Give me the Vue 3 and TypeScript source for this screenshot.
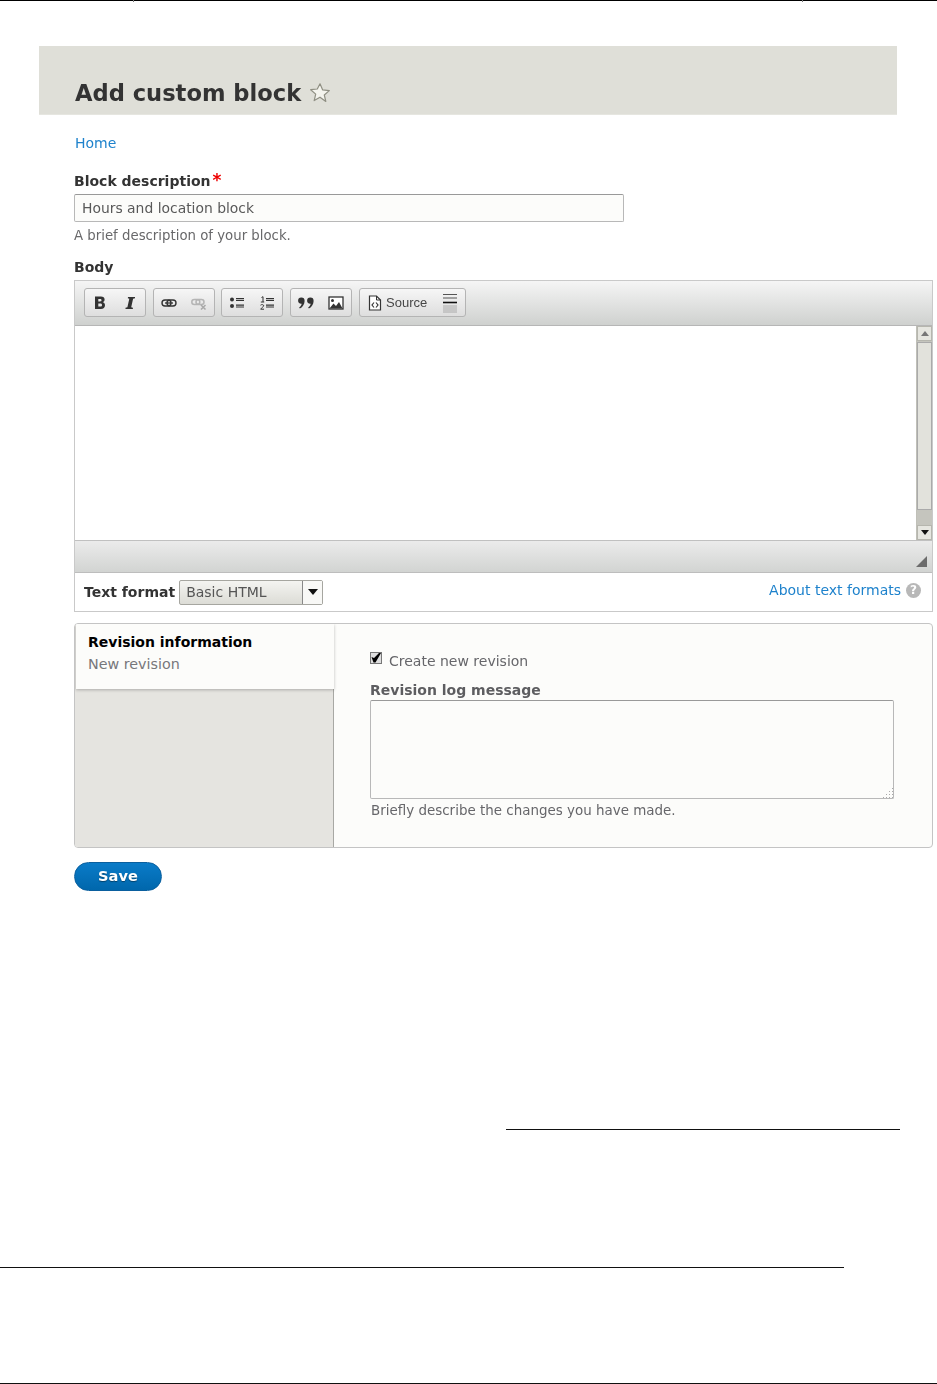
<script setup lang="ts">
const noop = (): void => {}
void noop
</script>

<template>
  <div class="page">
    <div class="top-rule"><i class="tick tick-a"></i><i class="tick tick-b"></i></div>
    <header class="header">
      <h1 class="title">Add custom block</h1>
      <svg class="star" width="22" height="22" viewBox="0 0 22 22">
        <path d="M11 1.800l2.700 6.100 6.600.7-5 4.400 1.500 6.500L11 15.200l-5.800 3.400 1.500-6.500-5-4.400 6.600-.7z" fill="#f4f4ee" stroke="#8f8f83" stroke-width="1.200" stroke-linejoin="round"/>
      </svg>
    </header>

    <main class="content">
      <a class="home link">Home</a>

      <div class="field-label desc-label">Block description<span class="req">*</span></div>
      <div class="text-input">Hours and location block</div>
      <div class="help first-help">A brief description of your block.</div>

      <div class="field-label body-label">Body</div>
      <section class="editor">
        <div class="toolbar">
          <div class="group">
            <span class="tb"><svg width="16" height="16" viewBox="0 0 16 16"><path d="M3 1.500h5.900c2.400 0 3.700 1.100 3.700 3.100 0 1.300-.7 2.300-1.900 2.700 1.500.3 2.300 1.400 2.300 3 0 2.400-1.500 3.700-4.100 3.700H3zM6.300 3.900v2.500h1.900c.8 0 1.300-.4 1.300-1.200s-.5-1.300-1.300-1.300zM6.300 8.600v3h2.200c.9 0 1.500-.5 1.500-1.500s-.6-1.500-1.500-1.500z" fill="#333"/></svg></span>
            <span class="tb"><svg width="16" height="16" viewBox="0 0 16 16"><path d="M6 2h7v1.300l-1.900.5-1.900 8.400 1.700.5V14H3.500v-1.300l1.900-.5 1.900-8.400-1.500-.5z" fill="#333"/></svg></span>
          </div>
          <div class="group group-tight">
            <span class="tb"><svg width="16" height="16" viewBox="0 0 16 16"><rect x="1" y="5" width="9" height="6" rx="3" fill="none" stroke="#333" stroke-width="1.400"/><rect x="6" y="5" width="9" height="6" rx="3" fill="none" stroke="#333" stroke-width="1.400"/><path d="M4 8h8" stroke="#333" stroke-width="1.300"/></svg></span>
            <span class="tb"><svg width="16" height="16" viewBox="0 0 16 16"><rect x="0.800" y="4.500" width="8" height="5" rx="2.500" fill="none" stroke="#b5b5b5" stroke-width="1.500"/><rect x="5" y="4.500" width="8" height="5" rx="2.500" fill="none" stroke="#b5b5b5" stroke-width="1.500"/><path d="M10 10l4.500 4.500M14.500 10L10 14.500" stroke="#a8a8a8" stroke-width="1.500"/></svg></span>
          </div>
          <div class="group">
            <span class="tb"><svg width="16" height="16" viewBox="0 0 16 16"><circle cx="3" cy="4.500" r="2" fill="#333"/><circle cx="3" cy="11" r="2" fill="#333"/><path d="M7 3.700h8M7 5.500h8M7 10.200h8M7 12h8" stroke="#333" stroke-width="1.200"/></svg></span>
            <span class="tb"><svg width="16" height="16" viewBox="0 0 16 16"><path d="M2.500 2.500l1.500-.8V7M1.800 7h3.400M1.500 10.200c1-1 3.300-.7 3.200.6-.1 1-2.300 2-3 3.400h3.300" fill="none" stroke="#333" stroke-width="1"/><path d="M7 3.700h8M7 5.500h8M7 10.200h8M7 12h8" stroke="#333" stroke-width="1.200"/></svg></span>
          </div>
          <div class="group">
            <span class="tb"><svg width="18" height="16" viewBox="0 0 18 16"><path d="M4.300 2.500a3.300 3.300 0 0 1 3.300 3.400c0 3-1.800 6-4.700 7.600l-.8-1c1.500-1.100 2.400-2.500 2.600-3.800a3.500 3.500 0 0 1-.5.100 3.150 3.150 0 0 1 .1-6.300zM13.300 2.500a3.300 3.300 0 0 1 3.300 3.400c0 3-1.800 6-4.700 7.600l-.8-1c1.500-1.100 2.400-2.500 2.600-3.800a3.500 3.500 0 0 1-.5.100 3.150 3.150 0 0 1 .1-6.300z" fill="#333"/></svg></span>
            <span class="tb"><svg width="16" height="16" viewBox="0 0 16 16"><rect x="1" y="2" width="14" height="12" fill="#fff" stroke="#333" stroke-width="1.300"/><circle cx="4.500" cy="5.500" r="1.500" fill="#333"/><path d="M1.500 13.500l4-5 2.500 2.500 3-4 3.500 6.500z" fill="#333"/></svg></span>
          </div>
          <div class="group source-group">
            <span class="tb"><svg width="16" height="16" viewBox="0 0 16 16"><path d="M2.500 1h7l4 4v10h-11z" fill="#fff" stroke="#333" stroke-width="1.200"/><path d="M9.500 1v4h4" fill="none" stroke="#333" stroke-width="1"/><path d="M7 7.500L5 10l2 2.500M9 7.500l2 2.500-2 2.500" fill="none" stroke="#333" stroke-width="1.200"/></svg></span>
            <span class="source-text">Source</span>
            <span class="tb"><svg width="16" height="20" viewBox="0 0 16 20"><path d="M1 1.500h14M1 5h14" stroke="#555" stroke-width="1"/><path d="M1 9.500h14" stroke="#111" stroke-width="1.600"/><path d="M1 13h14M1 15h14M1 17h14M1 19h14" stroke="#aaa" stroke-width="1"/></svg></span>
          </div>
        </div>

        <div class="edit-area">
          <div class="scrollbar">
            <span class="arrow-btn"><i class="tri tri-up"></i></span>
            <span class="thumb"></span>
            <span class="track"></span>
            <span class="arrow-btn"><i class="tri tri-down"></i></span>
          </div>
        </div>

        <div class="statusbar"><i class="resize"></i></div>

        <div class="format-row">
          <span class="format-label">Text format</span>
          <span class="select">
            <span class="select-value">Basic HTML</span>
            <span class="select-arrow"><i class="tri tri-down tri-big"></i></span>
          </span>
          <span class="spacer"></span>
          <a class="link about">About text formats</a>
          <span class="q">?</span>
        </div>
      </section>

      <section class="tabs">
        <aside class="tab-side">
          <div class="tab-active">
            <strong class="tab-title">Revision information</strong>
            <span class="tab-sub">New revision</span>
          </div>
        </aside>
        <div class="tab-pane">
          <label class="check-row">
            <span class="checkbox">
              <svg width="10" height="10" viewBox="0 0 10 10"><path d="M0.500 4l2.500 1L8 0h2L4.500 9.500H2.500z" fill="#000"/></svg>
            </span>
            <span class="check-text">Create new revision</span>
          </label>
          <div class="log-label">Revision log message</div>
          <div class="log-box"><i class="grip"></i></div>
          <div class="help log-help">Briefly describe the changes you have made.</div>
        </div>
      </section>

      <button class="save" type="button">Save</button>
    </main>

    <div class="rule rule-short"></div>
    <div class="rule rule-long"></div>
    <div class="rule rule-bottom"></div>
  </div>
</template>

<style>
html, body { margin: 0; background: #fff; }
</style>

<style scoped>
.page {
  width: 937px;
  height: 1384px;
  display: flex;
  flex-direction: column;
  font-family: "DejaVu Sans", sans-serif;
  font-size: 14px;
  color: #333;
  overflow: hidden;
  box-sizing: border-box;
  background: #fff;
}
.top-rule { height: 1px; background: #000; position: relative; flex: none; }
.tick { position: absolute; top: 0; width: 1px; height: 2px; background: #777; }
.tick-a { left: 133px; }
.tick-b { left: 802px; }
.header {
  flex: none;
  margin: 45px 40px 0 39px;
  background: #dfdfd8;
  border-bottom: 1px solid #e6e6e0;
  display: flex;
  align-items: flex-end;
  gap: 8px;
  padding-left: 36px;
  padding-bottom: 6px;
  box-sizing: content-box;
  height: 62px;
  filter: blur(0.35px);
}
.title { margin: 0; font-size: 22.6px; font-weight: 700; line-height: 29px; color: #333; }
.star { margin-bottom: 4px; }
.content {
  flex: none;
  padding: 0 4px 0 74px;
  display: flex;
  flex-direction: column;
  align-items: flex-start;
  filter: blur(0.35px);
}
.link { color: #1e82cc; }
.home { margin-top: 19px; margin-left: 1px; font-size: 14px; line-height: 18px; }
.field-label { font-size: 14px; font-weight: 700; line-height: 18px; color: #333; }
.desc-label { margin-top: 20px; display: flex; align-items: flex-start; }
.req { color: #e00; margin-left: 2px; margin-top: 1px; font-size: 17px; line-height: 14px; font-weight: 700; }
.text-input {
  width: 550px;
  height: 28px;
  box-sizing: border-box;
  margin-top: 4px;
  border: 1px solid #b8b8b8;
  border-top-color: #999;
  border-radius: 2px;
  background: #fcfcfa;
  padding-left: 7px;
  line-height: 26px;
  font-size: 13.9px;
  color: #595959;
}
.help { font-size: 13.3px; line-height: 18px; color: #68686a; }
.first-help { margin-top: 5px; }
.body-label { margin-top: 13px; }
.editor {
  margin-top: 4px;
  width: 859px;
  box-sizing: border-box;
  border: 1px solid #c9c9c9;
  background: #fff;
  display: flex;
  flex-direction: column;
}
.toolbar {
  height: 45px;
  box-sizing: border-box;
  border-bottom: 1px solid #b6b6b6;
  background: linear-gradient(#f5f5f5, #cfd1cf);
  display: flex;
  align-items: flex-start;
  gap: 7px;
  padding: 7px 0 0 9px;
}
.group {
  height: 29px;
  box-sizing: border-box;
  border: 1px solid #b4b4b4;
  border-radius: 3px;
  background: linear-gradient(#f6f6f6, #dedede);
  display: flex;
  align-items: center;
  justify-content: space-around;
  width: 62px;
}
.group-tight { margin-right: -1px; }
.source-group { width: 107px; justify-content: flex-start; padding-left: 6px; }
.source-group .tb:last-child { margin-left: 14px; }
.tb { display: flex; width: 18px; justify-content: center; }
.source-text { margin-left: 2px; font-family: "Liberation Sans", Arial, sans-serif; font-size: 13px; color: #474747; }
.edit-area { height: 214px; background: #fff; position: relative; display: flex; justify-content: flex-end; }
.scrollbar {
  width: 16px;
  background: #c5c5be;
  border-left: 1px solid #c0c0b8;
  box-sizing: border-box;
  display: flex;
  flex-direction: column;
}
.arrow-btn {
  flex: none;
  height: 15px;
  background: #e6e6e0;
  border: 1px solid #b6b6ae;
  box-sizing: border-box;
  display: flex;
  align-items: center;
  justify-content: center;
}
.thumb { flex: none; height: 168px; background: #e2e2dc; border: 1px solid #aaa; margin-top: 1px; box-sizing: border-box; }
.track { flex: 1; }
.tri { display: block; width: 0; height: 0; border-left: 4px solid transparent; border-right: 4px solid transparent; }
.tri-up { border-bottom: 5px solid #777; }
.tri-down { border-top: 5px solid #111; }
.tri-big { border-left-width: 5px; border-right-width: 5px; border-top-width: 6px; }
.statusbar {
  height: 33px;
  box-sizing: border-box;
  border-top: 1px solid #c0c0c0;
  border-bottom: 1px solid #bdbdbd;
  background: linear-gradient(#ebebeb, #d2d4d2);
  position: relative;
}
.resize {
  position: absolute;
  right: 5px;
  bottom: 5px;
  width: 0;
  height: 0;
  border-left: 11px solid transparent;
  border-bottom: 11px solid #6c6c6c;
}
.format-row {
  height: 38px;
  display: flex;
  align-items: center;
  padding: 0 11px 0 9px;
}
.format-label { font-weight: 700; font-size: 14px; color: #333; }
.select {
  margin-left: 4px;
  width: 144px;
  height: 25px;
  box-sizing: border-box;
  border: 1px solid #a6a6a0;
  border-radius: 2px;
  background: linear-gradient(#f4f4f1, #dcdcd6);
  display: flex;
  align-items: center;
  color: #555;
}
.select-value { flex: 1; padding-left: 6px; font-size: 14px; }
.select-arrow {
  width: 20px;
  height: 100%;
  border-left: 1px solid #888;
  background: #f8f8f6;
  display: flex;
  align-items: center;
  justify-content: center;
  box-sizing: border-box;
}
.spacer { flex: 1; }
.about { font-size: 14px; margin-top: -4px; }
.q {
  margin-left: 5px;
  margin-top: -4px;
  width: 15px;
  height: 15px;
  border-radius: 50%;
  background: #b8b8b8;
  color: #fff;
  font-size: 12px;
  font-weight: 700;
  text-align: center;
  line-height: 15px;
}
.tabs {
  margin-top: 11px;
  width: 859px;
  height: 225px;
  box-sizing: border-box;
  border: 1px solid #c4c4c4;
  border-radius: 4px;
  background: #fcfcfa;
  display: flex;
  overflow: hidden;
}
.tab-side {
  width: 259px;
  flex: none;
  box-sizing: border-box;
  background: #e5e4e0;
  border-right: 1px solid #a8a8a4;
  height: 100%;
}
.tab-active {
  width: 258px;
  height: 65px;
  box-sizing: border-box;
  background: #fcfcfa;
  box-shadow: 0 1px 3px rgba(0, 0, 0, 0.25);
  padding: 9px 0 0 12px;
  display: flex;
  flex-direction: column;
  margin-left: 1px;
}
.tab-title { font-size: 14px; line-height: 18px; color: #000; }
.tab-sub { margin-top: 4px; font-size: 14.3px; line-height: 18px; color: #77777b; }
.tab-pane { flex: 1; padding: 27px 0 0 36px; }
.check-row { display: flex; align-items: flex-start; color: #66666a; font-size: 14px; line-height: 18px; }
.check-text { margin-top: 1px; }
.checkbox {
  width: 12px;
  height: 12px;
  box-sizing: border-box;
  border: 1px solid #777;
  background: #dedede;
  margin-top: 1px;
  margin-right: 7px;
  display: flex;
  align-items: center;
  justify-content: center;
}
.log-label { margin-top: 11px; font-weight: 700; font-size: 14px; line-height: 18px; color: #5d5d60; }
.log-box {
  width: 524px;
  height: 99px;
  margin-top: 1px;
  box-sizing: border-box;
  border: 1px solid #b8b8b8;
  border-top-color: #999;
  border-radius: 2px;
  position: relative;
  background: #fcfcfa;
}
.grip {
  position: absolute;
  right: 0;
  bottom: 0;
  width: 11px;
  height: 11px;
  background: radial-gradient(circle, #aaa 0.8px, transparent 1px) 0 0 / 3px 3px;
  clip-path: polygon(100% 0, 100% 100%, 0 100%);
}
.log-help { margin-top: 3px; margin-left: 1px; font-size: 13.45px; color: #66666a; }
.save {
  margin-top: 14px;
  width: 88px;
  height: 29px;
  border: 1px solid #0a5f9e;
  border-radius: 15px;
  background: linear-gradient(#0a7bc8, #0067ac);
  color: #fff;
  font-family: "DejaVu Sans", sans-serif;
  font-size: 14.6px;
  font-weight: 700;
  line-height: 25px;
  padding: 0 0 2px;
  text-shadow: 0 1px 1px rgba(0, 0, 0, 0.4);
}
.rule { flex: none; height: 1px; background: #111; }
.rule-short { margin: 238px 0 0 506px; width: 394px; }
.rule-long { margin-top: 137px; width: 844px; }
.rule-bottom { margin-top: 115px; width: 937px; }
</style>
